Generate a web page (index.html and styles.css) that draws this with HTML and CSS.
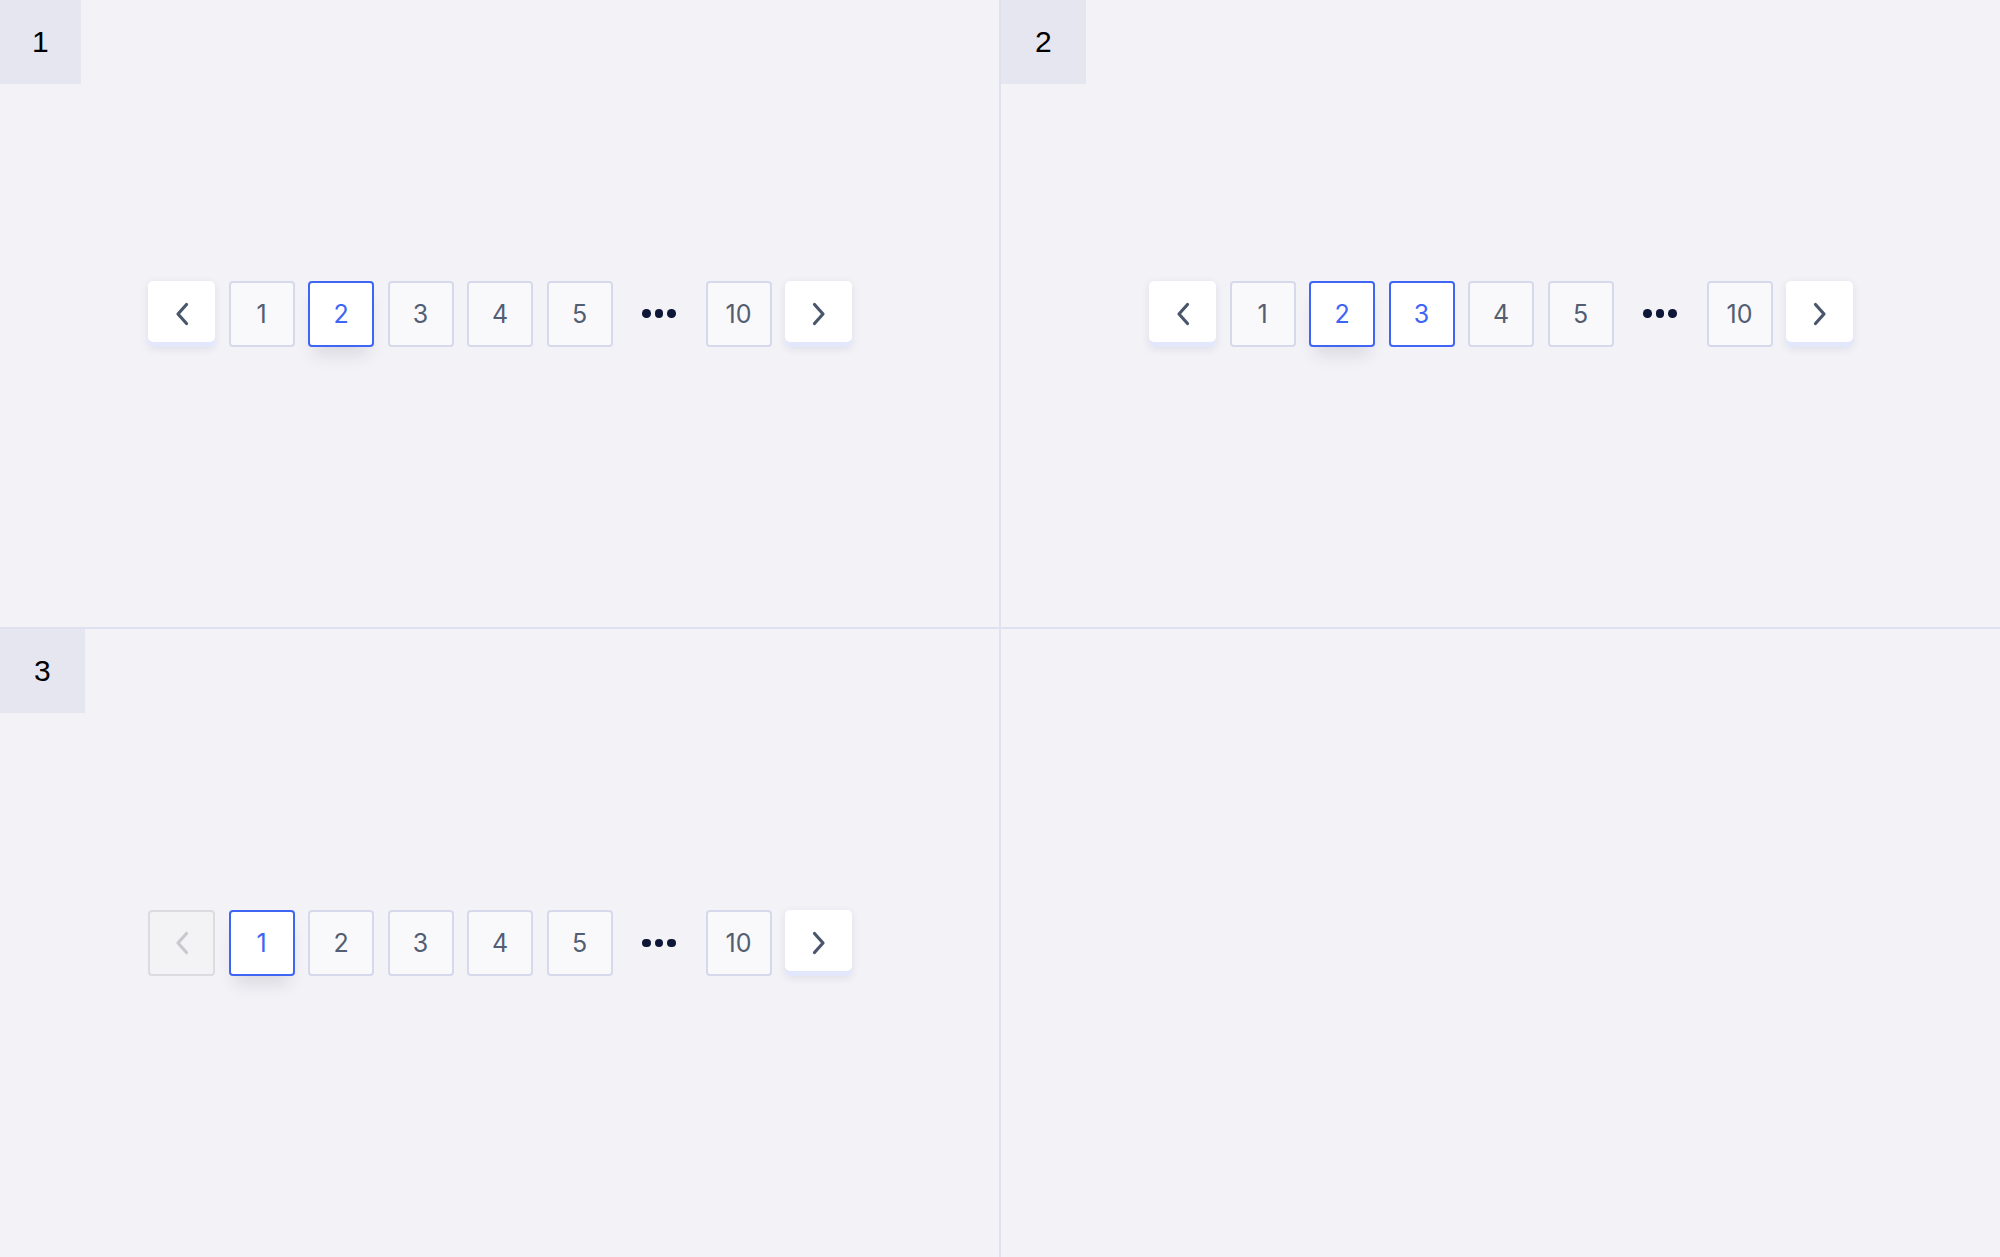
FILE: index.html
```html
<!DOCTYPE html>
<html lang="en">
<head>
<meta charset="utf-8">
<title>Pagination states</title>
<link rel="stylesheet" href="styles.css">
</head>
<body>
<div class="board">
  <section class="cell">
    <div class="label">1</div>
    <nav class="pager">
      <button class="nav"><svg viewBox="0 0 14 24" width="14" height="24"><path d="M11.5 2.5 L3 12 L11.5 21.5"/></svg></button>
      <button class="page">1</button>
      <button class="page active">2</button>
      <button class="page">3</button>
      <button class="page">4</button>
      <button class="page">5</button>
      <span class="dots"><i></i><i></i><i></i></span>
      <button class="page">10</button>
      <button class="nav"><svg viewBox="0 0 14 24" width="14" height="24"><path d="M2.5 2.5 L11 12 L2.5 21.5"/></svg></button>
    </nav>
  </section>
  <section class="cell">
    <div class="label wide">2</div>
    <nav class="pager">
      <button class="nav"><svg viewBox="0 0 14 24" width="14" height="24"><path d="M11.5 2.5 L3 12 L11.5 21.5"/></svg></button>
      <button class="page">1</button>
      <button class="page active">2</button>
      <button class="page selected">3</button>
      <button class="page">4</button>
      <button class="page">5</button>
      <span class="dots"><i></i><i></i><i></i></span>
      <button class="page">10</button>
      <button class="nav"><svg viewBox="0 0 14 24" width="14" height="24"><path d="M2.5 2.5 L11 12 L2.5 21.5"/></svg></button>
    </nav>
  </section>
  <section class="cell">
    <div class="label wide">3</div>
    <nav class="pager">
      <button class="nav disabled"><svg viewBox="0 0 14 24" width="14" height="24"><path d="M11.5 2.5 L3 12 L11.5 21.5"/></svg></button>
      <button class="page active">1</button>
      <button class="page">2</button>
      <button class="page">3</button>
      <button class="page">4</button>
      <button class="page">5</button>
      <span class="dots"><i></i><i></i><i></i></span>
      <button class="page">10</button>
      <button class="nav"><svg viewBox="0 0 14 24" width="14" height="24"><path d="M2.5 2.5 L11 12 L2.5 21.5"/></svg></button>
    </nav>
  </section>
  <section class="cell"></section>
</div>
</body>
</html>
```
FILE: styles.css
```css
html, body {
  margin: 0;
  padding: 0;
}
body {
  width: 2000px;
  height: 1257px;
  overflow: hidden;
  background: #dfe1f0;
  font-family: Inter, "Liberation Sans", sans-serif;
}
.board {
  display: grid;
  grid-template-columns: 999px 999px;
  grid-template-rows: 627px 628px;
  gap: 2px;
  width: 2000px;
  height: 1257px;
  background: #dfe1f0;
}
.cell {
  background: #f2f2f7;
  display: grid;
  grid-template: 1fr / 1fr;
}
.label {
  grid-area: 1 / 1;
  align-self: start;
  justify-self: start;
  height: 84px;
  padding: 0 32px;
  background: #e6e6f0;
  color: #000;
  font-family: "Liberation Sans", Arial, sans-serif;
  font-size: 30px;
  display: flex;
  align-items: center;
}
.label.wide {
  padding: 0 34px;
}
.pager {
  grid-area: 1 / 1;
  place-self: center;
  display: flex;
  align-items: center;
  gap: 13.5px;
  margin-left: 1px;
}
button {
  font: inherit;
  margin: 0;
  padding: 0;
  cursor: pointer;
}
.page {
  box-sizing: border-box;
  width: 66px;
  height: 66px;
  border: 2px solid #d6d9ec;
  border-radius: 4px;
  background: #f9f9fc;
  color: #535e72;
  font-size: 25px;
  font-weight: 400;
  display: flex;
  align-items: center;
  justify-content: center;
}
.page.active {
  border-color: #3f65f5;
  background: #ffffff;
  color: #3f65f5;
  box-shadow: 0 14px 16px -6px rgba(40, 40, 60, 0.12);
}
.page.selected {
  border-color: #3f65f5;
  background: #ffffff;
  color: #3f65f5;
}
.nav {
  box-sizing: border-box;
  width: 67px;
  height: 66px;
  border: none;
  border-radius: 5px;
  background: #ffffff;
  box-shadow: inset 0 -5px 0 #e2e7fb, 0 2px 8px rgba(30, 30, 70, 0.09);
  display: flex;
  align-items: center;
  justify-content: center;
}
.nav svg path {
  fill: none;
  stroke: #4a566b;
  stroke-width: 3.2;
  stroke-linecap: round;
  stroke-linejoin: round;
}
.nav.disabled {
  background: #f3f3f5;
  border: 2px solid #dcdce0;
  border-radius: 4px;
  box-shadow: none;
  cursor: default;
}
.nav.disabled svg path {
  stroke: #c9c9cd;
}
.dots {
  width: 66px;
  height: 66px;
  display: flex;
  align-items: center;
  justify-content: center;
  gap: 4px;
}
.dots i {
  width: 8.5px;
  height: 8.5px;
  border-radius: 50%;
  background: #0f1738;
}
```
